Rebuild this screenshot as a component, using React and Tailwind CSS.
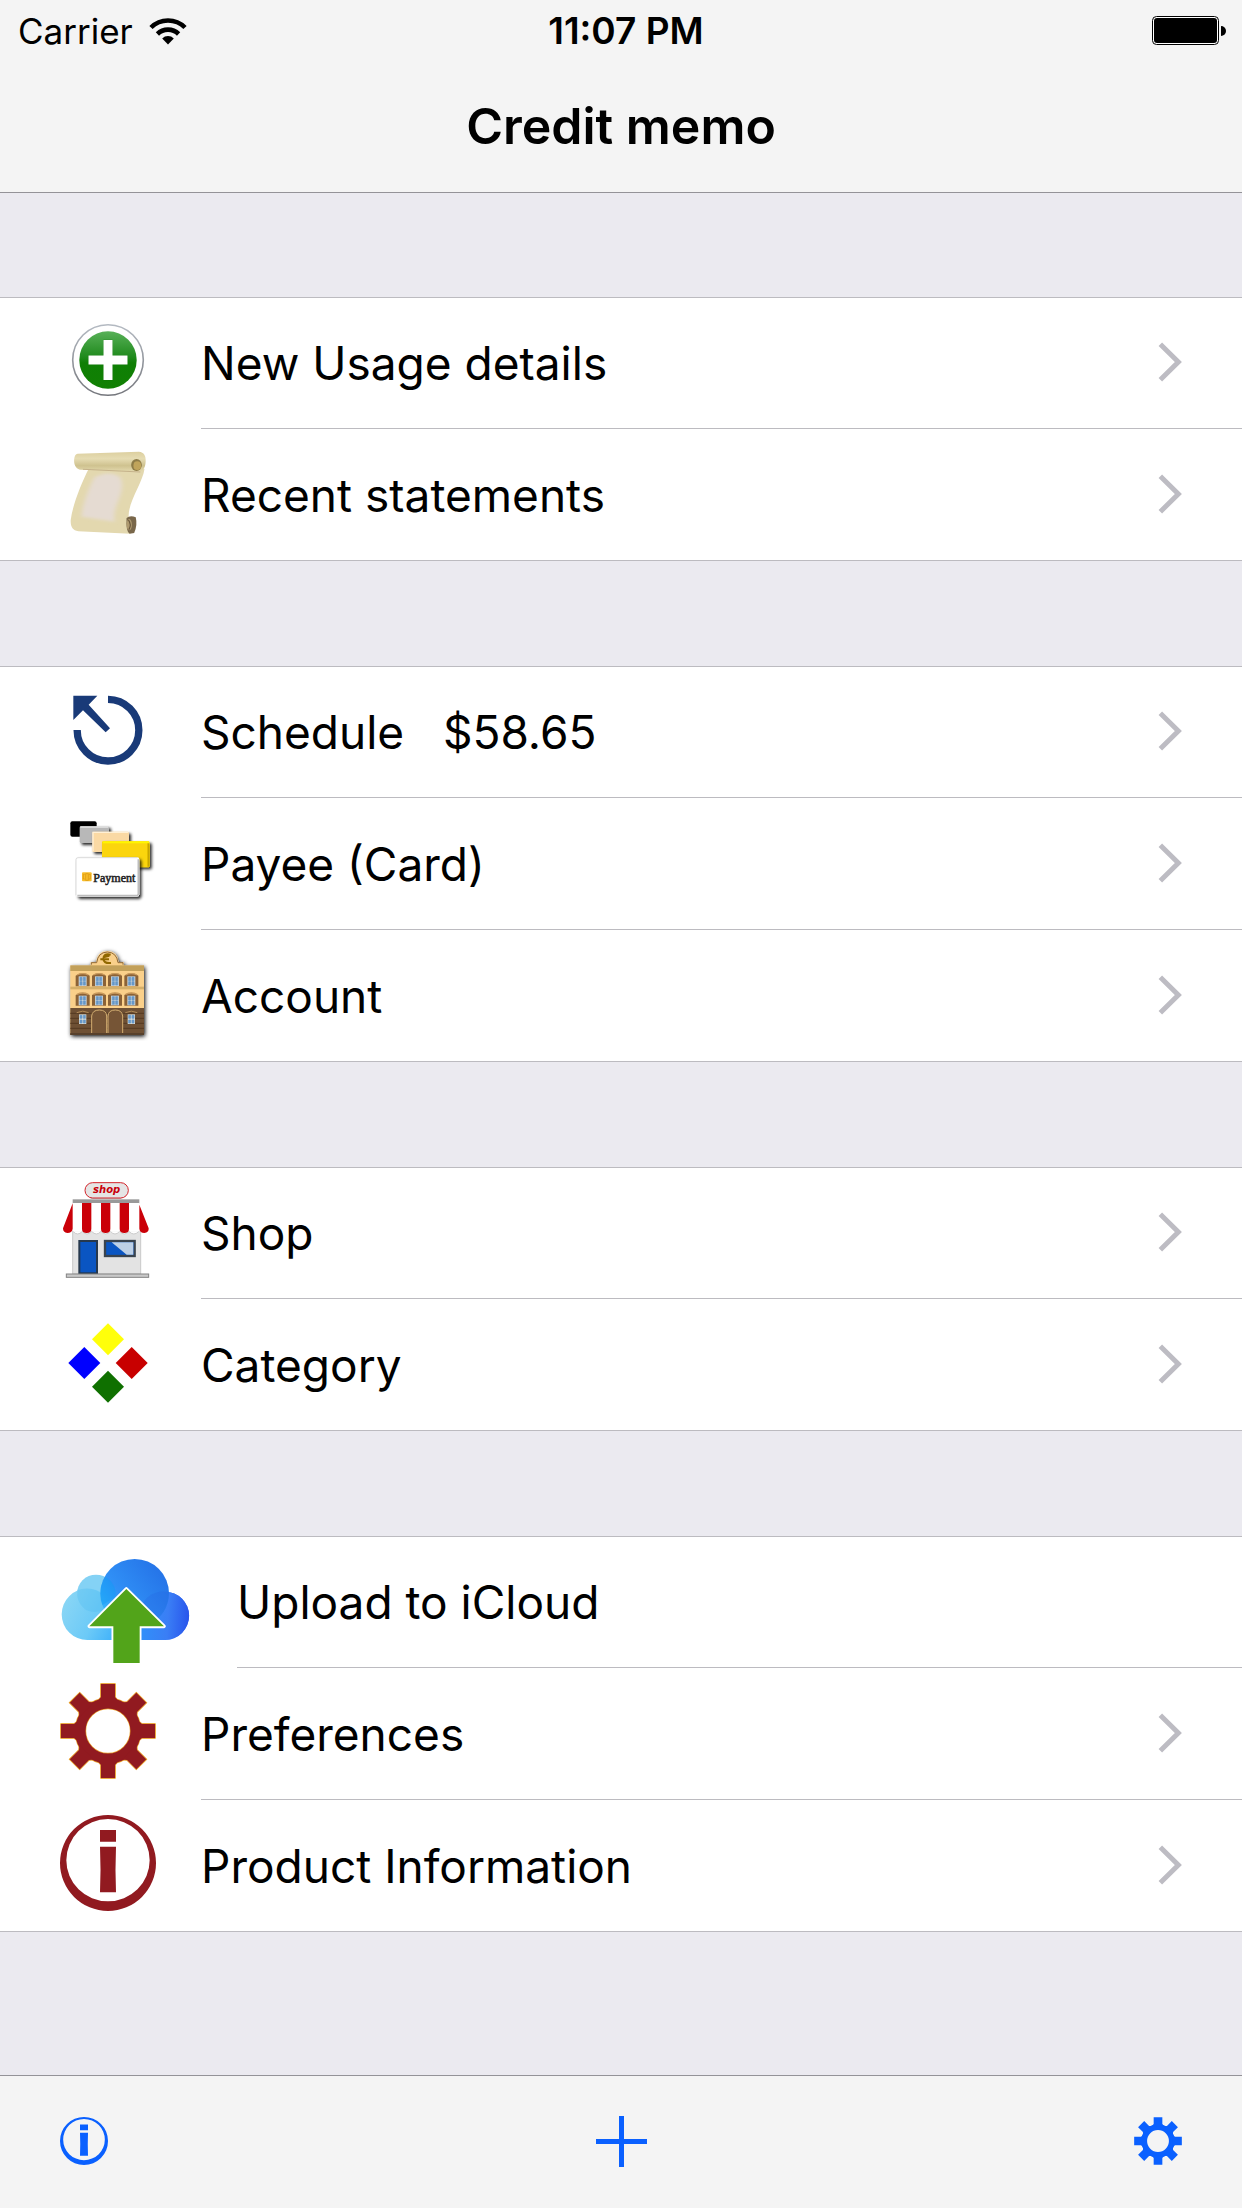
import React from "react";

function WifiIcon() {
  return (
    <svg viewBox="0 0 38 28" className="h-7 w-[38px]" aria-hidden="true">
      <g fill="none" stroke="#000" strokeWidth="4.6">
        <path d="M2 10.5 A24 24 0 0 1 36 10.5" />
        <path d="M8.4 17 A15 15 0 0 1 29.6 17" />
      </g>
      <path d="M19 27.5 L13.2 21.4 A8.4 8.4 0 0 1 24.8 21.4 Z" />
    </svg>
  );
}

function BatteryIcon() {
  return (
    <svg viewBox="0 0 74 30" className="h-[30px] w-[74px]" role="img" aria-label="Battery full">
      <rect x="0.5" y="0.5" width="66" height="28" rx="4" fill="#fff" stroke="#000" />
      <rect x="2" y="2" width="63" height="25" rx="3" />
      <path d="M69 10 a5 5 0 0 1 0 10 z" />
    </svg>
  );
}

function AddIcon() {
  return (
    <svg viewBox="60 312 96 96" className="size-24" aria-hidden="true">
      <defs>
        <linearGradient id="addGreen" x1="0" y1="0" x2="0" y2="1">
          <stop offset="0" stopColor="#58b058" />
          <stop offset="0.45" stopColor="#1f8a1c" />
          <stop offset="0.55" stopColor="#0f7f05" />
          <stop offset="1" stopColor="#118003" />
        </linearGradient>
        <linearGradient id="addRim" x1="0" y1="0" x2="0" y2="1">
          <stop offset="0" stopColor="#b4bac2" />
          <stop offset="1" stopColor="#75777d" />
        </linearGradient>
      </defs>
      <circle cx="108" cy="360" r="35.3" fill="#fff" stroke="url(#addRim)" strokeWidth="1.6" />
      <circle cx="108" cy="360" r="28.7" fill="url(#addGreen)" />
      <path d="M103.5 340h9v15.5h15v9h-15v15.5h-9v-15.5h-15v-9h15z" fill="#fff" stroke="#0b6a06" strokeOpacity="0.35" strokeWidth="1" paintOrder="stroke" />
    </svg>
  );
}

function ScrollIcon() {
  return (
    <svg viewBox="52 462 251 288" preserveAspectRatio="none" className="size-24" aria-hidden="true">
      <defs>
        <linearGradient id="rollTop" x1="0" y1="0" x2="0" y2="1">
          <stop offset="0" stopColor="#dccf9f" />
          <stop offset="0.35" stopColor="#e6dcb3" />
          <stop offset="0.7" stopColor="#cfc28f" />
          <stop offset="1" stopColor="#e3d9ae" />
        </linearGradient>
        <filter id="scrollSoft"><feGaussianBlur stdDeviation="5" /></filter>
      </defs>
      <path d="M127 536 L273 536 C268 580 226 640 232 688 L236 731 L100 724 C85 722 79 710 80 690 C86 640 108 580 127 536Z" fill="#e3d8af" />
      <path d="M142 562 Q180 540 208 560 Q222 580 205 630 Q190 670 195 695 L108 680 Q112 630 142 562Z" fill="#e5dbd2" filter="url(#scrollSoft)" />
      <path d="M98 491 L258 485 C272 486 277 498 276 515 C275 535 268 545 256 545 L104 539 C92 536 88 522 89 508 C90 497 93 492 98 491Z" fill="url(#rollTop)" />
      <path d="M112 538 L262 546" stroke="#c5b28b" strokeWidth="3" />
      <ellipse cx="252" cy="525" rx="14" ry="18" fill="#8e7c48" />
      <ellipse cx="254" cy="527" rx="10" ry="13" fill="#c0a45b" />
      <path d="M226 684 Q236 674 250 682 Q255 705 246 729 L234 731 Q224 724 226 684Z" fill="#79674a" />
      <ellipse cx="233" cy="704" rx="7" ry="17" fill="#ad996f" />
      <path d="M231 690 Q240 704 232 719" fill="none" stroke="#66543a" strokeWidth="3" />
    </svg>
  );
}

function ScheduleIcon() {
  return (
    <svg viewBox="60 63 288 288" className="size-24" aria-hidden="true">
      <path d="M204 118 A92.5 92.5 0 1 1 111.500 210" fill="none" stroke="#193a78" strokeWidth="22" />
      <path d="M100 107 L172 107 L146 134 L210 205 L197 217 L129 151 L100 180Z" fill="#193a78" />
    </svg>
  );
}

function PayeeIcon() {
  return (
    <svg viewBox="60 459 288 288" className="size-24" aria-hidden="true">
      <defs>
        <filter id="cardShadow" x="-20%" y="-20%" width="150%" height="160%">
          <feDropShadow dx="6" dy="6" stdDeviation="5" floodColor="#000" floodOpacity="0.85" />
        </filter>
      </defs>
      <rect x="91" y="484" width="79" height="46" rx="6" fill="#000" />
      <g filter="url(#cardShadow)">
        <rect x="119" y="499" width="88" height="50" rx="4" fill="#b8b8b8" />
        <path d="M121 501h84" stroke="#ececec" strokeWidth="4" />
      </g>
      <g filter="url(#cardShadow)">
        <rect x="157" y="515" width="110" height="61" rx="4" fill="#fad9a4" />
        <path d="M159 574V517h106" fill="none" stroke="#fff0d5" strokeWidth="4" />
      </g>
      <g filter="url(#cardShadow)">
        <rect x="186" y="544" width="143" height="78" rx="4" fill="#fbd50a" />
        <path d="M188 547h139" stroke="#fff600" strokeWidth="6" />
        <path d="M325 550v70" stroke="#c8a500" strokeWidth="5" />
      </g>
      <g filter="url(#cardShadow)">
        <rect x="108" y="592" width="190" height="118" rx="7" fill="#fff" />
        <path d="M112 707h180l3-4V598" fill="none" stroke="#bdbdbd" strokeWidth="5" />
      </g>
      <path d="M108 706V599q0-6 6-6h178" fill="none" stroke="#c9c9c9" strokeWidth="2" />
      <rect x="126" y="637" width="29" height="27" rx="3" fill="#f7bd2b" />
      <path d="M134 643h-4v14h4M147 643h4v14h-4M137 641h8v20h-8z" fill="none" stroke="#d9940e" strokeWidth="2" />
      <text x="160" y="665" fontFamily="Liberation Serif, serif" fontSize="36" fill="#222" stroke="#222" strokeWidth="1.6">Payment</text>
    </svg>
  );
}

function BankWindow({ x, y }) {
  return (
    <g>
      <path d={`M${x - 21} ${y - 15} Q${x} ${y - 29} ${x + 21} ${y - 15} V${y + 17} H${x - 21}Z`} fill="#8b6236" />
      <path d={`M${x - 17} ${y - 17} Q${x} ${y - 25} ${x + 17} ${y - 17}`} fill="none" stroke="#c9995b" strokeWidth="4" />
      <rect x={x - 12} y={y - 13} width="24" height="29" fill="#c3d0d8" />
      <path d={`M${x - 8} ${y - 10}h6v10h-6z M${x + 2} ${y - 10}h6v10h-6z M${x - 8} ${y + 3}h6v10h-6z M${x + 2} ${y + 3}h6v10h-6z`} fill="#6798c9" stroke="#6798c9" strokeWidth="2" />
    </g>
  );
}

function AccountIcon() {
  const columns = [128, 177, 225, 274];
  return (
    <svg viewBox="60 855 288 288" className="size-24" aria-hidden="true">
      <defs>
        <filter id="bankShadow" x="-20%" y="-20%" width="150%" height="150%">
          <feDropShadow dx="3" dy="4" stdDeviation="7" floodColor="#000" floodOpacity="1" />
        </filter>
      </defs>
      <g filter="url(#bankShadow)">
        <path d="M91 917 H152 V906 H168 Q172 874 202 873 Q232 874 236 906 H251 V917 H312 V1125 H91Z" fill="#fad08a" />
      </g>
      <path d="M154 914V908H170Q174 877 202 876Q230 877 234 908H249V914" fill="none" stroke="#8d683a" strokeWidth="3" />
      <rect x="91" y="916" width="221" height="17" fill="#c2a05a" />
      <rect x="91" y="980" width="221" height="8" fill="#d4af69" />
      <path d="M212 884 Q190 879 190 897 Q192 911 213 909 M181 898 H207 M190 892 L208 887" fill="none" stroke="#916800" strokeWidth="6" />
      {columns.map((x) => <BankWindow key={`a${x}`} x={x} y={962} />)}
      {columns.map((x) => <BankWindow key={`b${x}`} x={x} y={1020} />)}
      <rect x="91" y="1044" width="221" height="81" fill="#6e5034" />
      <path d="M91 1060h221M91 1075h221M91 1090h221M91 1105h221" stroke="#553a22" strokeWidth="3" />
      <path d="M155 1121V1068Q157 1050 178 1050Q199 1050 200 1068V1121ZM204 1121V1068Q205 1050 226 1050Q246 1050 248 1068V1121Z" fill="#765536" stroke="#d2ad70" strokeWidth="3" />
      {[128, 274].map((x) => (
        <g key={x}>
          <path d={`M${x - 18} 1058Q${x} 1049 ${x + 18} 1058`} fill="none" stroke="#b28b57" strokeWidth="3" />
          <rect x={x - 11} y="1063" width="22" height="29" fill="#d4d9d6" />
          <path d={`M${x - 8} 1066h6v9h-6zM${x + 2} 1066h6v9h-6zM${x - 8} 1080h6v9h-6zM${x + 2} 1080h6v9h-6z`} fill="#6798c9" stroke="#6798c9" strokeWidth="2" />
        </g>
      ))}
      <rect x="91" y="1119" width="221" height="6" fill="#57402b" />
    </svg>
  );
}

function ShopIcon() {
  return (
    <svg viewBox="60 66 288 288" className="size-24" aria-hidden="true">
      <rect x="98" y="200" width="204" height="142" fill="#e3e3e3" stroke="#cacaca" strokeWidth="3" />
      <rect x="98" y="118" width="200" height="12" fill="#999" />
      <rect x="152" y="110" width="92" height="8" fill="#c2c2c2" />
      <rect x="135" y="68" width="130" height="46" rx="23" fill="#e5e5e5" stroke="#d3232a" strokeWidth="3" />
      <text x="200" y="99" textAnchor="middle" fontFamily="DejaVu Sans, sans-serif" fontSize="30" fontWeight="700" fontStyle="italic" fill="#c8000a">shop</text>
      <path d="M98 129H298L312 212H84Z" fill="#fff" />
      <path d="M99 214q14 16 28 0q14 16 28 0q14 16 28 0q14 16 28 0q14 16 28 0q14 16 28 0q14 16 30 0" fill="#fff" stroke="#ccc" strokeWidth="3" />
      <path d="M99 130h27v84h-27zM155 130h27v84h-27zM211 130h28v84h-28zM267 130h30v84h-30z" fill="#fff" />
      <path d="M98 130V206Q96 219 82 219Q69 218 69 205ZM126 129H154V206Q154 219 140 219Q126 219 126 206ZM183 129H211V206Q211 219 197 219Q183 219 183 206ZM239 129H267V206Q267 219 253 219Q239 219 239 206ZM298 134L326 205Q327 218 313 219Q300 219 298 206Z" fill="#ca0008" />
      <rect x="118" y="243" width="53" height="97" fill="#0a55c2" stroke="#26384d" strokeWidth="6" />
      <rect x="195" y="243" width="89" height="45" fill="#0a55c2" stroke="#39434e" strokeWidth="7" />
      <path d="M215 247H280V284H260Z" fill="#bdd0e6" />
      <rect x="79" y="342" width="247" height="10" fill="#c9c9c9" stroke="#848484" strokeWidth="3" />
    </svg>
  );
}

function CategoryIcon() {
  return (
    <svg viewBox="60 462 288 288" className="size-24" aria-hidden="true">
      <path d="M204 490l48 48-48 48-48-48z" fill="#ffff0a" />
      <path d="M133 561l48 48-48 48-48-48z" fill="#00f" />
      <path d="M275 561l48 48-48 48-48-48z" fill="#c80000" />
      <path d="M204 632l48 48-48 48-48-48z" fill="#0f7000" />
    </svg>
  );
}

function CloudIcon() {
  return (
    <svg viewBox="60 21 396 378" className="h-[126px] w-[132px]" aria-hidden="true">
      <defs>
        <linearGradient id="cloudLeft" gradientUnits="userSpaceOnUse" x1="65" y1="220" x2="260" y2="320">
          <stop offset="0" stopColor="#8ad6f5" />
          <stop offset="0.5" stopColor="#6ccaf7" />
          <stop offset="1" stopColor="#2fa8fb" />
        </linearGradient>
        <linearGradient id="cloudRight" gradientUnits="userSpaceOnUse" x1="290" y1="250" x2="447" y2="260">
          <stop offset="0" stopColor="#2f93fb" />
          <stop offset="0.6" stopColor="#3a7ef5" />
          <stop offset="1" stopColor="#2855ec" />
        </linearGradient>
        <linearGradient id="cloudBig" gradientUnits="userSpaceOnUse" x1="190" y1="240" x2="350" y2="120">
          <stop offset="0" stopColor="#36b4fb" />
          <stop offset="0.35" stopColor="#3090f6" />
          <stop offset="1" stopColor="#2676e9" />
        </linearGradient>
      </defs>
      <circle cx="168" cy="191" r="57" fill="#84d2f5" />
      <path d="M142 176A77 77 0 0 0 142 330H300V240L215 225A77 77 0 0 0 142 176Z" fill="url(#cloudLeft)" />
      <path d="M113 180A57 57 0 0 0 140 241A57 57 0 0 0 210 222A77 77 0 0 0 113 180Z" fill="#4cb9ee" opacity="0.3" />
      <path d="M290 240L375 185A72 72 0 0 1 375 330H280Z" fill="url(#cloudRight)" />
      <circle cx="375" cy="257" r="72" fill="url(#cloudRight)" />
      <circle cx="284" cy="190" r="103" fill="url(#cloudBig)" />
      <path d="M184 166A103 103 0 0 0 187 226L226 200A57 57 0 0 0 195 140Z" fill="#0d9cf4" opacity="0.4" />
      <path d="M386 186A103 103 0 0 1 345 273L300 240A72 72 0 0 1 386 186Z" fill="#225fe0" opacity="0.25" />
      <path d="M220 399V289H148L259 177L372 289H299V399" fill="#52a41a" stroke="#fff" strokeWidth="11" strokeLinejoin="round" paintOrder="stroke" />
    </svg>
  );
}

const toothAngles = [0, 45, 90, 135, 180, 225, 270, 315];

function PreferencesIcon() {
  return (
    <svg viewBox="0 0 288 288" className="size-24" aria-hidden="true">
      <g fill="#e9a12b" stroke="#e9a12b">
        <circle cx="144" cy="144" r="83" fill="none" strokeWidth="35" />
        {toothAngles.map((a) => (
          <path key={a} d="M122 2H166V42L176 54H112L122 42Z" transform={`rotate(${a} 144 144)`} strokeWidth="3" />
        ))}
      </g>
      <g fill="#911a20">
        <circle cx="144" cy="144" r="83" fill="none" stroke="#911a20" strokeWidth="31" />
        {toothAngles.map((a) => (
          <path key={a} d="M123 3H165V42L175 54H113L123 42Z" transform={`rotate(${a} 144 144)`} />
        ))}
      </g>
    </svg>
  );
}

function InfoShape() {
  return (
    <>
      <path fillRule="evenodd" d="M144 0A144 144 0 1 1 144 288A144 144 0 1 1 144 0ZM144 12A125 123.500 0 1 0 144 259A125 123.500 0 1 0 144 12Z" />
      <path d="M120 45H168V80H120ZM120 95H168Q165 163 168 232H120Q123 163 120 95Z" />
    </>
  );
}

function InformationIcon() {
  return (
    <svg viewBox="0 0 288 288" className="size-24" fill="#911a20" aria-hidden="true">
      <InfoShape />
    </svg>
  );
}

function Chevron() {
  return (
    <svg viewBox="174 154 72 120" className="mb-0.5 h-10 w-6 shrink-0" aria-hidden="true">
      <path d="M181 161L235 214L181 267" fill="none" stroke="#bdbcc3" strokeWidth="15" />
    </svg>
  );
}

const groups = [
  [
    { label: "New Usage details", Icon: AddIcon },
    { label: "Recent statements", Icon: ScrollIcon },
  ],
  [
    { label: "Schedule   $58.65", Icon: ScheduleIcon },
    { label: "Payee (Card)", Icon: PayeeIcon },
    { label: "Account", Icon: AccountIcon },
  ],
  [
    { label: "Shop", Icon: ShopIcon },
    { label: "Category", Icon: CategoryIcon },
  ],
  [
    { label: "Upload to iCloud", Icon: CloudIcon, tall: true },
    { label: "Preferences", Icon: PreferencesIcon },
    { label: "Product Information", Icon: InformationIcon },
  ],
];

function Row({ label, Icon, tall }) {
  return (
    <li className="group h-[132px] first:h-[131px] last:h-[131px]">
      <button type="button" className="flex h-full w-full gap-[45px] pl-[60px] text-left">
        <span className={tall ? "shrink-0" : "mt-[15px] shrink-0 group-first:mt-[14px]"}>
          <Icon />
        </span>
        <span className="flex h-full min-w-0 flex-1 items-center justify-between border-b border-[#bcbbc0] pr-[60px] group-last:border-b-0">
          <span className="whitespace-pre text-[46px] leading-[60px]">{label}</span>
          {!tall && <Chevron />}
        </span>
      </button>
    </li>
  );
}

export default function App() {
  return (
    <div className="flex min-h-screen flex-col bg-[#ebeaf0] font-[Inter,sans-serif] text-black">
      <header className="border-b border-[#949398] bg-[#f4f4f4]">
        <div className="grid h-[60px] grid-cols-3 items-center pr-2 pl-[18px] pt-0.5 leading-10">
          <div className="flex items-center gap-4 text-[35px] leading-10">
            <span>Carrier</span>
            <WifiIcon />
          </div>
          <time className="text-center text-[37px] leading-10 font-semibold">11:07 PM</time>
          <div className="flex justify-end pr-2">
            <BatteryIcon />
          </div>
        </div>
        <h1 className="flex h-[132px] items-center justify-center text-[50px] font-semibold">Credit memo</h1>
      </header>

      <main className="flex flex-1 flex-col gap-[105px] py-[104px]">
        {groups.map((rows) => (
          <ul key={rows[0].label} className="border-y border-[#bcbbc0] bg-white">
            {rows.map((row) => (
              <Row key={row.label} {...row} />
            ))}
          </ul>
        ))}
      </main>

      <nav className="flex h-[133px] items-center justify-between border-t border-[#949398] bg-[#f4f4f4] px-[60px] pb-0.5 text-[#0a60ff]">
        <button type="button" aria-label="Information">
          <svg viewBox="0 0 288 288" className="size-12" fill="currentColor" aria-hidden="true">
            <InfoShape />
          </svg>
        </button>
        <button type="button" aria-label="Add">
          <svg viewBox="0 0 51 51" className="size-[51px]" fill="currentColor" aria-hidden="true">
            <path d="M23 0h5v23h23v5H28v23h-5V28H0v-5h23z" />
          </svg>
        </button>
        <button type="button" aria-label="Settings">
          <svg viewBox="0 0 288 288" className="size-12" fill="currentColor" aria-hidden="true">
            <circle cx="144" cy="144" r="83" fill="none" stroke="currentColor" strokeWidth="35" />
            {toothAngles.map((a) => (
              <path key={a} d="M118 1H170V42L182 56H106L118 42Z" transform={`rotate(${a} 144 144)`} />
            ))}
          </svg>
        </button>
      </nav>
    </div>
  );
}
